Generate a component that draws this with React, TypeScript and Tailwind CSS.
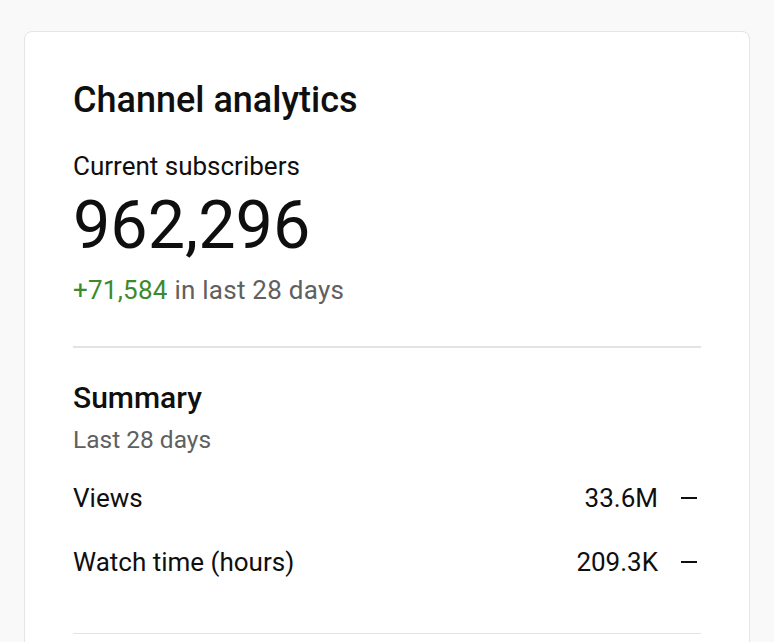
export default function App() {
  return (
    <div className="min-h-[642px] w-full bg-[#f9f9f9] pl-[24px] pt-[31px] pr-[24px]" style={{ fontFamily: 'Roboto, "Noto Sans", Arial, sans-serif' }}>
      <div className="h-[640px] w-[726px] overflow-hidden rounded-[8px] border border-[#e5e5e5] bg-white px-[48px] pt-[46px]">
        <h1 className="text-[36px] leading-[44px] font-medium text-[#0f0f0f]">Channel analytics</h1>
        <div className="mt-[28px] text-[26px] leading-[32px] text-[#0f0f0f]">Current subscribers</div>
        <div className="mt-[3px] text-[66.5px] leading-[80px] text-[#0f0f0f]">962,296</div>
        <div className="mt-[9px] text-[26px] leading-[32px] tracking-[0.25px] text-[#606060]">
          <span className="text-[#3b8a2e]">+71,584</span> in last 28 days
        </div>
        <div className="mt-[40px] h-[1.5px] bg-[#e3e3e3]" />
        <div className="mt-[32px] text-[30px] leading-[36px] font-medium text-[#0f0f0f]">Summary</div>
        <div className="mt-[8px] text-[24.5px] leading-[32px] text-[#606060]">Last 28 days</div>
        <div className="mt-[26px] flex items-center text-[26px] leading-[32px] text-[#0f0f0f]">
          <span className="flex-1">Views</span>
          <span>33.6M</span>
          <span className="ml-[19px] flex h-[24px] w-[24px] items-center justify-center">
            <span className="block h-[2px] w-[16px] bg-[#0f0f0f]" />
          </span>
        </div>
        <div className="mt-[32px] flex items-center text-[26px] leading-[32px] text-[#0f0f0f]">
          <span className="flex-1">Watch time (hours)</span>
          <span>209.3K</span>
          <span className="ml-[19px] flex h-[24px] w-[24px] items-center justify-center">
            <span className="block h-[2px] w-[16px] bg-[#0f0f0f]" />
          </span>
        </div>
        <div className="mt-[55px] h-[1.5px] bg-[#e3e3e3]" />
      </div>
    </div>
  );
}
